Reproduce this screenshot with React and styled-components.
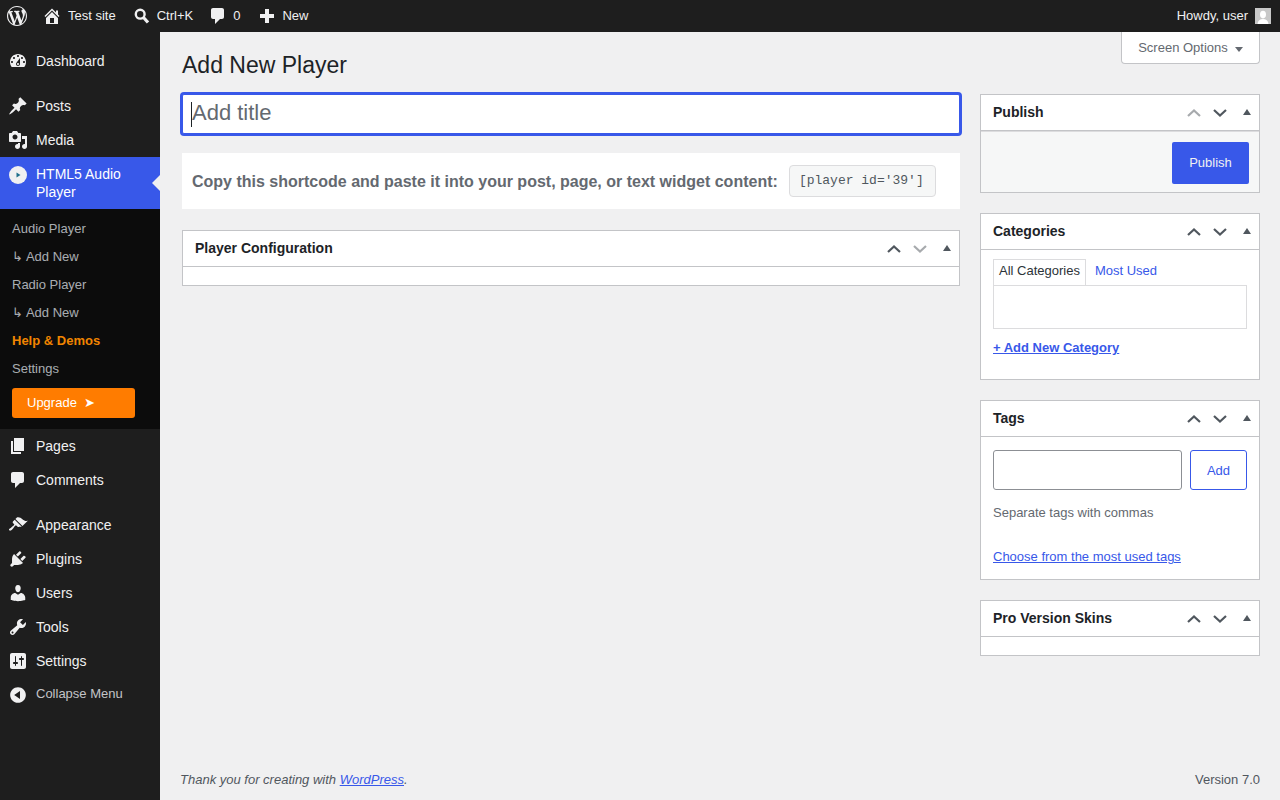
import React from 'react';
import styled, { createGlobalStyle } from 'styled-components';

const GlobalStyle = createGlobalStyle`
  html, body {
    margin: 0;
    padding: 0;
    height: 100%;
    overflow: hidden;
    background: #f0f0f1;
    font-family: "Liberation Sans", Arial, sans-serif;
    font-size: 13px;
    color: #3c434a;
  }
  * { box-sizing: border-box; }
`;

const ICONS = {
  wordpress: 'M20 10c0-5.51-4.49-10-10-10C4.48 0 0 4.49 0 10c0 5.52 4.48 10 10 10 5.51 0 10-4.48 10-10zM7.78 15.37L4.37 6.22c.55-.02 1.17-.08 1.17-.08.5-.06.44-1.13-.06-1.11 0 0-1.45.11-2.37.11-.18 0-.37 0-.58-.01C4.12 2.69 6.87 1.11 10 1.11c2.33 0 4.45.87 6.05 2.34-.68-.11-1.65.39-1.65 1.58 0 .74.45 1.36.9 2.1.35.61.55 1.36.55 2.46 0 1.49-1.4 5-1.4 5l-3.03-8.37c.54-.02.82-.17.82-.17.5-.05.44-1.25-.06-1.22 0 0-1.44.12-2.38.12-.87 0-2.33-.12-2.33-.12-.5-.03-.56 1.2-.06 1.22l.92.08 1.26 3.41zM17.41 10c.24-.64.74-1.87.43-4.25.7 1.29 1.05 2.71 1.05 4.25 0 3.29-1.73 6.24-4.4 7.78.97-2.59 1.94-5.2 2.92-7.78zM6.1 18.09C3.12 16.65 1.11 13.53 1.11 10c0-1.3.23-2.48.72-3.59C3.25 10.3 4.67 14.2 6.1 18.09zm4.03-6.63l2.58 6.98c-.86.29-1.76.45-2.71.45-.79 0-1.57-.11-2.29-.33.81-2.38 1.62-4.74 2.42-7.1z',
  home: 'M16 8.5l1.53 1.53-1.06 1.06L10 4.62l-6.47 6.47-1.06-1.06L10 2.5l4 4v-2h2v4zm-6-2.46l6 5.99V18H4v-5.97zM12 17v-5H8v5h4z',
  comment: 'M5 2h9c1.1 0 2 .9 2 2v7c0 1.1-.9 2-2 2h-2l-5 5v-5H5c-1.1 0-2-.9-2-2V4c0-1.1.9-2 2-2z',
  plus: 'M8 3h4v5h5v4h-5v5H8v-5H3V8h5z',
  dashboard: 'M3.76 16h12.48c1.1-1.37 1.76-3.11 1.76-5 0-4.42-3.58-8-8-8s-8 3.58-8 8c0 1.89.66 3.63 1.76 5zM10 4c.55 0 1 .45 1 1s-.45 1-1 1-1-.45-1-1 .45-1 1-1zM6 6c.55 0 1 .45 1 1s-.45 1-1 1-1-.45-1-1 .45-1 1-1zm8 0c.55 0 1 .45 1 1s-.45 1-1 1-1-.45-1-1 .45-1 1-1zm-5.37 5.55L12 7v6c0 1.1-.9 2-2 2s-2-.9-2-2c0-.57.24-1.08.63-1.45zM4 10c.55 0 1 .45 1 1s-.45 1-1 1-1-.45-1-1 .45-1 1-1zm12 0c.55 0 1 .45 1 1s-.45 1-1 1-1-.45-1-1 .45-1 1-1zm-5 3c0-.55-.45-1-1-1s-1 .45-1 1 .45 1 1 1 1-.45 1-1z',
  post: 'M10.44 3.02l1.82-1.82 6.36 6.35-1.83 1.82c-1.05-.68-2.48-.57-3.41.36l-.75.75c-.92.93-1.04 2.35-.35 3.41l-1.83 1.82-2.41-2.41-2.8 2.79c-.42.42-3.38 2.71-3.8 2.29s1.86-3.39 2.28-3.81l2.79-2.79L4.1 9.36l1.83-1.82c1.05.69 2.48.57 3.4-.36l.75-.75c.93-.92 1.05-2.35.36-3.41z',
  media: 'M13 11V4c0-.55-.45-1-1-1h-1.67L9 1H5L3.67 3H2c-.55 0-1 .45-1 1v7c0 .55.45 1 1 1h10c.55 0 1-.45 1-1zM7 4.5c1.38 0 2.5 1.12 2.5 2.5S8.38 9.5 7 9.5 4.5 8.38 4.5 7 5.62 4.5 7 4.5zM14 6h5v10.5c0 1.38-1.12 2.5-2.5 2.5S14 17.88 14 16.5s1.12-2.5 2.5-2.5c.17 0 .34.02.5.05V9h-3V6zm-4 8.05V13h2v3.5c0 1.38-1.12 2.5-2.5 2.5S7 17.88 7 16.5 8.12 14 9.5 14c.17 0 .34.02.5.05z',
  page: 'M6 15V2h10v13H6zm-1 1h8v2H3V5h2v11z',
  appearance: 'M14.48 11.06L7.41 3.99l1.5-1.5c.5-.56 2.3-.47 3.51.32 1.21.8 1.43 1.28 2.91 2.1 1.18.64 2.45 1.26 4.45.85zm-.71.71L6.7 4.7 4.93 6.47c-.39.39-.39 1.02 0 1.41l1.06 1.06c.39.39.39 1.03 0 1.42-.6.6-1.43 1.11-2.21 1.69-.35.26-.7.53-1.01.84C1.43 13.23.4 14.4 1.28 15.3c.88.88 2.07-.15 3.34-1.34.31-.31.58-.66.84-1 .58-.78 1.09-1.61 1.69-2.21.39-.39 1.03-.39 1.42 0l1.06 1.06c.39.39 1.02.39 1.41 0z',
  plugin: 'M13.11 4.36L9.87 7.6 8 5.73l3.24-3.24c.35-.34 1.05-.2 1.56.32.52.51.66 1.21.31 1.55zm-8 1.77l.91-1.12 9.01 9.01-1.19.84c-.71.71-2.63 1.16-3.82 1.16H6.14L4.9 17.26c-.59.59-1.54.59-2.12 0-.59-.58-.59-1.53 0-2.12l1.24-1.24v-3.88c0-1.13.4-3.19 1.09-3.89zm7.26 3.97l3.24-3.24c.34-.35 1.04-.21 1.55.31.52.51.66 1.21.31 1.55l-3.24 3.25z',
  users: 'M10 9.25c-2.27 0-2.73-3.44-2.73-3.44C7 4.02 7.82 2 9.97 2c2.16 0 2.98 2.02 2.71 3.81 0 0-.41 3.44-2.68 3.44zm0 2.57L12.72 10c2.39 0 4.52 2.33 4.52 4.53v2.49s-3.65 1.13-7.24 1.13c-3.65 0-7.24-1.13-7.24-1.13v-2.49c0-2.25 1.94-4.48 4.47-4.48z',
  tools: 'M16.68 9.77c-1.34 1.34-3.3 1.67-4.95.99l-5.41 6.52c-.99.99-2.59.99-3.58 0s-.99-2.59 0-3.57l6.52-5.42c-.68-1.65-.35-3.61.99-4.95 1.28-1.28 3.12-1.62 4.72-1.06l-2.89 2.89 2.82 2.82 2.86-2.87c.53 1.58.18 3.39-1.08 4.65zM3.81 16.21c.4.39 1.04.39 1.43 0 .4-.4.4-1.04 0-1.43-.39-.4-1.03-.4-1.43 0-.39.39-.39 1.03 0 1.43z',
  settings: 'M18 16V4c0-1.1-.9-2-2-2H4c-1.1 0-2 .9-2 2v12c0 1.1.9 2 2 2h12c1.1 0 2-.9 2-2zM8 11h1c.55 0 1 .45 1 1s-.45 1-1 1H8v1.5c0 .28-.22.5-.5.5s-.5-.22-.5-.5V13H6c-.55 0-1-.45-1-1s.45-1 1-1h1V5.5c0-.28.22-.5.5-.5s.5.22.5.5V11zm5-2h-1c-.55 0-1-.45-1-1s.45-1 1-1h1V5.5c0-.28.22-.5.5-.5s.5.22.5.5V7h1c.55 0 1 .45 1 1s-.45 1-1 1h-1v5.5c0 .28-.22.5-.5.5s-.5-.22-.5-.5V9z',
  collapse: 'M10 2.16c4.33 0 7.84 3.51 7.84 7.84s-3.51 7.84-7.84 7.84S2.16 14.33 2.16 10 5.71 2.16 10 2.16zm2 11.72V6.12L6.18 9.97z',
};

const Icon = ({ name, size = 20 }) => (
  <svg width={size} height={size} viewBox="0 0 20 20" fill="currentColor" aria-hidden="true">
    <path d={ICONS[name]} />
  </svg>
);

const SearchIcon = () => (
  <svg width="20" height="20" viewBox="0 0 20 20" aria-hidden="true">
    <circle cx="8.200" cy="8.200" r="4.400" fill="none" stroke="currentColor" strokeWidth="2.400" />
    <path d="M11.500 11.500l4.500 5" stroke="currentColor" strokeWidth="3.200" fill="none" />
  </svg>
);

const PlayerIcon = () => (
  <svg width="20" height="20" viewBox="0 0 20 20" aria-hidden="true">
    <circle cx="10" cy="10" r="9" fill="#f0f0f1" />
    <path d="M8.500 7.500l4 2.500-4 2.500z" fill="#1f6f8b" />
  </svg>
);

const Avatar = () => (
  <svg width="16" height="16" viewBox="0 0 16 16" aria-hidden="true">
    <rect width="16" height="16" fill="#c8c8c8" />
    <ellipse cx="8" cy="6.600" rx="3" ry="3.800" fill="#fff" />
    <path d="M2.500 16c.3-3.400 2.600-5 5.500-5s5.200 1.600 5.500 5z" fill="#fff" />
  </svg>
);

const Chevron = ({ up, disabled }) => (
  <svg width="14" height="8" viewBox="0 0 14 8" aria-hidden="true">
    <path
      d={up ? 'M1 7l6-5.500 6 5.500' : 'M1 1l6 5.500 6-5.500'}
      fill="none"
      stroke={disabled ? '#a7aaad' : '#50575e'}
      strokeWidth="2.200"
    />
  </svg>
);

const AdminBar = styled.header`
  height: 32px;
  background: #1e1e1e;
  color: #f0f0f1;
  display: flex;
  align-items: center;
  justify-content: space-between;
  padding: 0 9px 0 7px;
`;

const BarGroup = styled.div`
  display: flex;
  align-items: center;
  gap: ${(p) => p.$gap || 0}px;
`;

const BarItem = styled.div`
  display: flex;
  align-items: center;
  gap: ${(p) => p.$gap || 6}px;
  margin-left: ${(p) => p.$left || 0}px;
  color: #f0f0f1;
  white-space: nowrap;
`;

const BarLabel = styled.span`
  padding-bottom: 2px;
`;

const Shell = styled.div`
  display: flex;
  height: 768px;
`;

const Sidebar = styled.nav`
  width: 160px;
  flex: none;
  background: #1e1e1e;
  padding-top: 12px;
`;

const MenuItem = styled.div`
  position: relative;
  display: flex;
  align-items: ${(p) => (p.$active ? 'flex-start' : 'center')};
  min-height: 34px;
  margin-bottom: ${(p) => (p.$sep ? 11 : 0)}px;
  padding: ${(p) => (p.$active ? '8px 8px 8px 0' : '0 8px 0 0')};
  background: ${(p) => (p.$active ? '#3858e9' : 'transparent')};
  color: ${(p) => (p.$active ? '#fff' : '#f0f0f1')};
  font-size: 14px;
  line-height: 18px;
`;

const MenuIcon = styled.span`
  width: 36px;
  flex: none;
  display: flex;
  justify-content: center;
  color: #f0f0f1;
`;

const ActiveArrow = styled.span`
  position: absolute;
  right: 0;
  top: 18px;
  border: 8px solid transparent;
  border-left-width: 0;
  border-right-color: #f0f0f1;
`;

const SubMenu = styled.div`
  background: #0c0c0c;
  padding: 5px 0 11px;
`;

const SubItem = styled.div`
  height: 28px;
  display: flex;
  align-items: center;
  padding-left: 12px;
  color: ${(p) => (p.$highlight ? '#f18500' : 'rgba(240, 246, 252, 0.7)')};
  font-weight: ${(p) => (p.$highlight ? 700 : 400)};
`;

const UpgradeButton = styled.div`
  width: 123px;
  height: 30px;
  margin: 6px 0 0 12px;
  padding: 0 0 2px 15px;
  display: flex;
  align-items: center;
  gap: 7px;
  background: #ff7c00;
  border-radius: 3px;
  color: #fff;
`;

const CollapseLabel = styled.span`
  font-size: 13px;
  color: #c3c4c7;
  padding-bottom: 2px;
`;

const Main = styled.main`
  flex: 1;
  min-width: 0;
  display: flex;
  flex-direction: column;
  padding: 0 20px 0 22px;
`;

const TopRow = styled.div`
  height: 62px;
  display: flex;
  justify-content: space-between;
  align-items: flex-start;
`;

const PageTitle = styled.h1`
  margin: 0;
  padding-top: 19px;
  font-size: 23px;
  font-weight: 400;
  line-height: 29px;
  color: #1d2327;
`;

const ScreenOptions = styled.div`
  width: 139px;
  height: 32px;
  display: flex;
  align-items: center;
  justify-content: center;
  gap: 7px;
  background: #fff;
  border: 1px solid #c3c4c7;
  border-top: 0;
  border-radius: 0 0 4px 4px;
  color: #646970;
`;

const DownCaret = styled.span`
  width: 0;
  height: 0;
  margin-top: 3px;
  border: 4px solid transparent;
  border-bottom-width: 0;
  border-top: 5px solid #646970;
`;

const Columns = styled.div`
  display: flex;
  gap: 20px;
  align-items: flex-start;
`;

const Primary = styled.div`
  width: 778px;
  flex: none;
`;

const Secondary = styled.aside`
  width: 280px;
  flex: none;
  display: flex;
  flex-direction: column;
  gap: 20px;
`;

const TitleField = styled.div`
  position: relative;
`;

const TitleInput = styled.input`
  display: block;
  width: 100%;
  height: 40px;
  padding: 0 9px 2px;
  background: #fff;
  border: 1px solid #3858e9;
  border-radius: 2px;
  box-shadow: 0 0 0 2px #3858e9;
  outline: 0;
  font-family: inherit;
  font-size: 22px;
  color: #1d2327;
  &::placeholder {
    color: #646970;
    opacity: 1;
  }
`;

const TextCaret = styled.span`
  position: absolute;
  left: 9px;
  top: 8px;
  width: 1px;
  height: 25px;
  background: #1d2327;
`;

const ShortcodeBar = styled.div`
  height: 56px;
  margin: 19px 0 21px;
  padding: 0 10px;
  display: flex;
  align-items: center;
  gap: 11px;
  background: #fff;
`;

const ShortcodeText = styled.strong`
  padding-top: 2px;
  font-size: 16px;
  color: #646970;
  white-space: nowrap;
`;

const Code = styled.code`
  height: 32px;
  width: 147px;
  padding: 0 2px 2px 0;
  display: flex;
  align-items: center;
  justify-content: center;
  background: #f6f7f7;
  border: 1px solid #dcdcde;
  border-radius: 4px;
  font-family: "Liberation Mono", monospace;
  font-size: 13px;
  color: #50575e;
`;

const Box = styled.section`
  background: #fff;
  border: 1px solid #c3c4c7;
`;

const BoxHeader = styled.header`
  height: 36px;
  display: flex;
  align-items: center;
  justify-content: space-between;
  padding-left: 12px;
  border-bottom: 1px solid #c3c4c7;
`;

const BoxTitle = styled.h2`
  margin: 0 0 2px;
  font-size: 14px;
  font-weight: 700;
  color: #1d2327;
`;

const Handles = styled.div`
  display: flex;
  align-items: center;
`;

const Handle = styled.span`
  width: 26px;
  height: 36px;
  display: flex;
  align-items: center;
  justify-content: center;
`;

const ToggleHandle = styled.span`
  width: 26px;
  height: 36px;
  padding: 14px 0 0 10px;
  &::before {
    content: '';
    display: block;
    width: 0;
    height: 0;
    border: 4px solid transparent;
    border-top-width: 0;
    border-bottom: 6px solid #50575e;
  }
`;

const EmptyBody = styled.div`
  height: 18px;
`;

const PublishBody = styled.div`
  display: flex;
  justify-content: flex-end;
  padding: 10px 10px 8px;
  background: #f6f7f7;
  border-top: 1px solid #dcdcde;
`;

const PrimaryButton = styled.div`
  width: 77px;
  height: 42px;
  padding-bottom: 2px;
  display: flex;
  align-items: center;
  justify-content: center;
  background: #3858e9;
  border-radius: 2px;
  color: #f0f0f1;
`;

const CategoriesBody = styled.div`
  height: 129px;
  padding: 9px 12px 0;
`;

const Tabs = styled.div`
  display: flex;
  height: 26px;
`;

const Tab = styled.div`
  display: flex;
  align-items: center;
  padding: 0 ${(p) => (p.$active ? 5 : 8)}px 5px;
  border: 1px solid ${(p) => (p.$active ? '#dcdcde' : 'transparent')};
  border-bottom: 0;
  color: ${(p) => (p.$active ? '#2c3338' : '#3858e9')};
`;

const TabPanel = styled.div`
  height: 44px;
  border: 1px solid #dcdcde;
`;

const AddCategory = styled.a`
  display: block;
  margin-top: 11px;
  line-height: 16px;
  font-weight: 700;
  color: #3858e9;
  text-decoration: underline;
`;

const TagsBody = styled.div`
  height: 142px;
  padding: 13px 12px 0;
`;

const TagsRow = styled.div`
  display: flex;
  gap: 8px;
`;

const TagInput = styled.input`
  width: 189px;
  height: 40px;
  background: #fff;
  border: 1px solid #8c8f94;
  border-radius: 3px;
  outline: 0;
`;

const OutlineButton = styled.div`
  width: 57px;
  height: 40px;
  display: flex;
  align-items: center;
  justify-content: center;
  border: 1px solid #3858e9;
  border-radius: 3px;
  color: #3858e9;
`;

const HelpText = styled.p`
  margin: 15px 0 28px;
  line-height: 16px;
  color: #646970;
`;

const TagsLink = styled.a`
  display: block;
  line-height: 16px;
  color: #3858e9;
  text-decoration: underline;
`;

const Footer = styled.footer`
  margin: auto 0 0 -2px;
  height: 42px;
  display: flex;
  align-items: center;
  justify-content: space-between;
  color: #50575e;
`;

const FooterNote = styled.em`
  font-style: italic;
  & a {
    color: #3858e9;
    text-decoration: underline;
  }
`;

const MetaBox = ({ title, upDisabled, downDisabled, children }) => (
  <Box>
    <BoxHeader>
      <BoxTitle>{title}</BoxTitle>
      <Handles>
        <Handle><Chevron up disabled={upDisabled} /></Handle>
        <Handle><Chevron disabled={downDisabled} /></Handle>
        <ToggleHandle />
      </Handles>
    </BoxHeader>
    {children}
  </Box>
);

const MenuRow = ({ icon, label, sep }) => (
  <MenuItem $sep={sep}>
    <MenuIcon><Icon name={icon} /></MenuIcon>
    {label}
  </MenuItem>
);

const App = () => (
  <>
    <GlobalStyle />
    <AdminBar>
      <BarGroup>
        <BarItem><Icon name="wordpress" /></BarItem>
        <BarItem $left={15} $gap={6}><Icon name="home" /><BarLabel>Test site</BarLabel></BarItem>
        <BarItem $left={16} $gap={5}><SearchIcon /><BarLabel>Ctrl+K</BarLabel></BarItem>
        <BarItem $left={15} $gap={5}><Icon name="comment" /><BarLabel>0</BarLabel></BarItem>
        <BarItem $left={17} $gap={5}><Icon name="plus" /><BarLabel>New</BarLabel></BarItem>
      </BarGroup>
      <BarGroup $gap={7}>
        <BarLabel>Howdy, user</BarLabel>
        <Avatar />
      </BarGroup>
    </AdminBar>
    <Shell>
      <Sidebar>
        <MenuRow icon="dashboard" label="Dashboard" sep />
        <MenuRow icon="post" label="Posts" />
        <MenuRow icon="media" label="Media" />
        <MenuItem $active>
          <MenuIcon><PlayerIcon /></MenuIcon>
          HTML5 Audio Player
          <ActiveArrow />
        </MenuItem>
        <SubMenu>
          <SubItem>Audio Player</SubItem>
          <SubItem>↳ Add New</SubItem>
          <SubItem>Radio Player</SubItem>
          <SubItem>↳ Add New</SubItem>
          <SubItem $highlight>Help &amp; Demos</SubItem>
          <SubItem>Settings</SubItem>
          <UpgradeButton>Upgrade <span>➤</span></UpgradeButton>
        </SubMenu>
        <MenuRow icon="page" label="Pages" />
        <MenuRow icon="comment" label="Comments" sep />
        <MenuRow icon="appearance" label="Appearance" />
        <MenuRow icon="plugin" label="Plugins" />
        <MenuRow icon="users" label="Users" />
        <MenuRow icon="tools" label="Tools" />
        <MenuRow icon="settings" label="Settings" />
        <MenuItem>
          <MenuIcon><Icon name="collapse" /></MenuIcon>
          <CollapseLabel>Collapse Menu</CollapseLabel>
        </MenuItem>
      </Sidebar>
      <Main>
        <TopRow>
          <PageTitle>Add New Player</PageTitle>
          <ScreenOptions>Screen Options <DownCaret /></ScreenOptions>
        </TopRow>
        <Columns>
          <Primary>
            <TitleField>
              <TitleInput placeholder="Add title" readOnly />
              <TextCaret />
            </TitleField>
            <ShortcodeBar>
              <ShortcodeText>Copy this shortcode and paste it into your post, page, or text widget content:</ShortcodeText>
              <Code>[player id='39']</Code>
            </ShortcodeBar>
            <MetaBox title="Player Configuration" downDisabled>
              <EmptyBody />
            </MetaBox>
          </Primary>
          <Secondary>
            <MetaBox title="Publish" upDisabled>
              <PublishBody><PrimaryButton>Publish</PrimaryButton></PublishBody>
            </MetaBox>
            <MetaBox title="Categories">
              <CategoriesBody>
                <Tabs>
                  <Tab $active>All Categories</Tab>
                  <Tab>Most Used</Tab>
                </Tabs>
                <TabPanel />
                <AddCategory>+ Add New Category</AddCategory>
              </CategoriesBody>
            </MetaBox>
            <MetaBox title="Tags">
              <TagsBody>
                <TagsRow>
                  <TagInput />
                  <OutlineButton>Add</OutlineButton>
                </TagsRow>
                <HelpText>Separate tags with commas</HelpText>
                <TagsLink>Choose from the most used tags</TagsLink>
              </TagsBody>
            </MetaBox>
            <MetaBox title="Pro Version Skins">
              <EmptyBody />
            </MetaBox>
          </Secondary>
        </Columns>
        <Footer>
          <FooterNote>Thank you for creating with <a>WordPress</a>.</FooterNote>
          <span>Version 7.0</span>
        </Footer>
      </Main>
    </Shell>
  </>
);

export default App;
